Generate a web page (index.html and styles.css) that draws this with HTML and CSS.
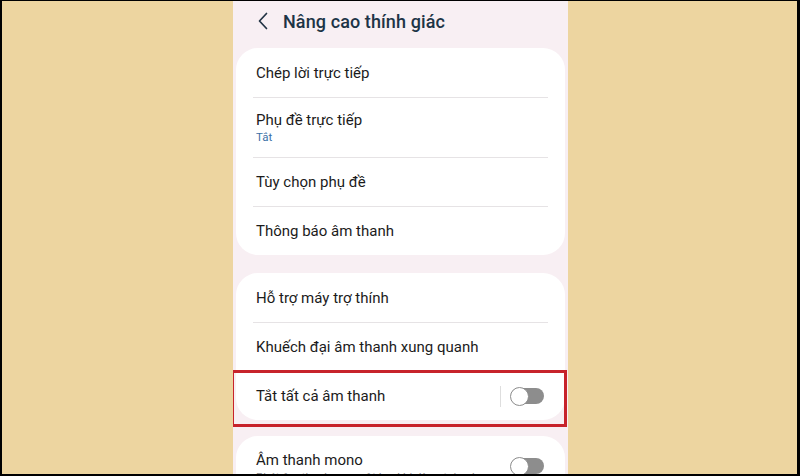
FILE: index.html
```html
<!DOCTYPE html>
<html lang="vi">
<head>
<meta charset="utf-8">
<link rel="stylesheet" href="styles.css">
</head>
<body>
<div class="frame">
  <div class="screen">
    <header class="topbar">
      <svg class="back" width="10" height="18" viewBox="0 0 10 18"><polyline points="8.5,1.5 1.5,9 8.5,16.5" fill="none" stroke="#223344" stroke-width="1.7" stroke-linecap="round" stroke-linejoin="round"/></svg>
      <h1 class="title">Nâng cao thính giác</h1>
    </header>

    <section class="card first">
      <div class="row"><span class="label">Chép lời trực tiếp</span></div>
      <div class="row two">
        <div class="texts"><span class="label">Phụ đề trực tiếp</span><span class="sub blue">Tắt</span></div>
      </div>
      <div class="row"><span class="label">Tùy chọn phụ đề</span></div>
      <div class="row"><span class="label">Thông báo âm thanh</span></div>
    </section>

    <section class="card">
      <div class="row"><span class="label">Hỗ trợ máy trợ thính</span></div>
      <div class="row"><span class="label">Khuếch đại âm thanh xung quanh</span></div>
      <div class="row highlighted">
        <span class="label">Tắt tất cả âm thanh</span>
        <span class="vsep"></span>
        <span class="toggle"><span class="knob"></span></span>
      </div>
    </section>

    <section class="card">
      <div class="row two top">
        <div class="texts"><span class="label">Âm thanh mono</span><span class="sub grey">Phát âm thanh qua một loa khi dùng tai nghe</span></div>
        <span class="toggle nosep"><span class="knob"></span></span>
      </div>
    </section>
  </div>
</div>
</body>
</html>
```

FILE: styles.css
```css
* { box-sizing: border-box; }
html, body { margin: 0; padding: 0; }
body {
  background: #000;
  font-family: Roboto, "Noto Sans", "Liberation Sans", sans-serif;
  width: 800px;
  height: 476px;
  overflow: hidden;
}
.frame {
  margin: 1px 3px 2px 2px;
  height: 473px;
  background: #edd5a0;
  display: flex;
  justify-content: center;
  overflow: hidden;
}
.screen {
  width: 335px;
  margin-left: 2px;
  height: 100%;
  background: #f8eff3;
  padding: 0 3px;
  overflow: hidden;
}
.topbar {
  height: 47px;
  display: flex;
  align-items: center;
  padding-left: 22px;
  padding-bottom: 6px;
  gap: 15px;
}
.back { flex: none; margin-top: -1px; }
.title {
  margin: 0;
  font-size: 18px;
  font-weight: 500;
  color: #1d3446;
  letter-spacing: 0.1px;
}
.card {
  background: #fff;
  border-radius: 22px;
  padding: 0 17px;
  margin-bottom: 16px;
}
.card.first { margin-bottom: 18px; }
.row {
  display: flex;
  align-items: center;
  height: 49px;
  padding: 0 4px 0 3px;
  border-top: 1px solid #e6e3e5;
}
.row:first-child { border-top: none; }
.row.two { height: 60px; }
.row.top { align-items: flex-start; padding-top: 14px; }
.row.top .toggle { margin-top: 8px; }
.texts { display: flex; flex-direction: column; }
.label {
  font-size: 15px;
  line-height: 20px;
  color: #1b1b1b;
}
.sub { font-size: 11.5px; line-height: 15px; }
.sub.blue { color: #3b6fa6; }
.sub.grey { color: #8a8a8a; }
.highlighted { position: relative; }
.highlighted::after {
  content: "";
  position: absolute;
  left: -22px;
  right: -19px;
  top: -2px;
  bottom: -7px;
  border: 3px solid #c7232b;
}
.vsep {
  margin-left: auto;
  width: 1px;
  height: 21px;
  background: #dedede;
  margin-right: 10px;
}
.toggle {
  position: relative;
  width: 33px;
  height: 16px;
  border-radius: 8px;
  background: #8d8d8d;
  flex: none;
}
.toggle.nosep { margin-left: auto; }
.knob {
  position: absolute;
  left: -1px;
  top: -1.5px;
  width: 19px;
  height: 19px;
  border-radius: 50%;
  background: #fff;
  border: 1.5px solid #8d8d8d;
}
```
